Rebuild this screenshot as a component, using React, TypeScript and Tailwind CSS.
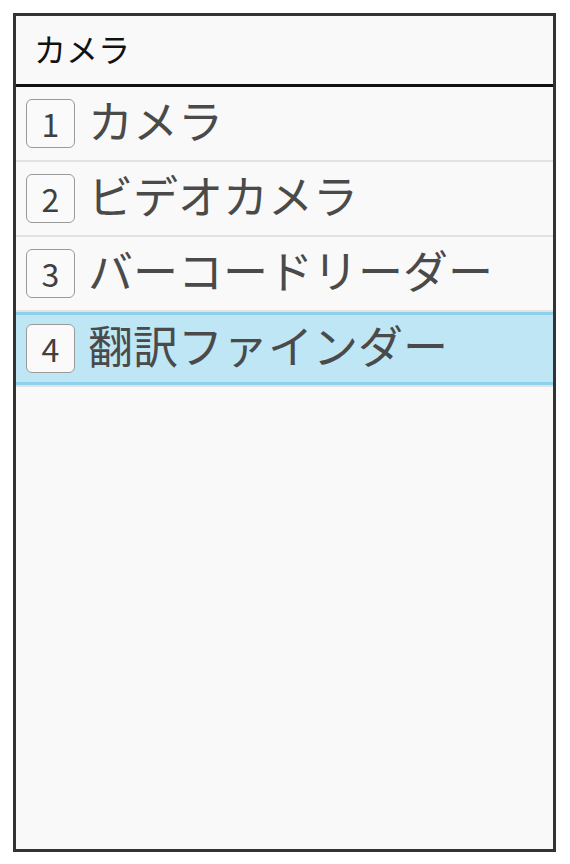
const items = ['カメラ', 'ビデオカメラ', 'バーコードリーダー', '翻訳ファインダー'];

const font = { fontFamily: '"Noto Sans CJK JP", "Noto Sans", sans-serif' };

function MenuRow({ num, label, selected }: { num: number; label: string; selected: boolean }) {
  return (
    <div className="border-b-2 border-[#e2e2e2]">
      <div
        className={
          selected
            ? 'flex h-[73px] items-center gap-[13px] border-y-[3px] border-[#8dd1ec] bg-[#bfe6f4] pl-[10px]'
            : 'flex h-[73px] items-center gap-[13px] pl-[10px]'
        }
      >
        <div className="flex h-[49px] w-[49px] shrink-0 items-center justify-center rounded-[6px] border-[1.5px] border-[#9a9a9a] bg-[#fafafa] pb-[2px] text-[32px] leading-none text-[#404040]">
          {num}
        </div>
        <span className="pb-[8px] text-[45px] leading-none text-[#4a4a4a]">{label}</span>
      </div>
    </div>
  );
}

export default function App() {
  return (
    <div className="min-h-[864px] w-[570px] bg-white p-[13px]" style={font}>
      <div className="flex h-[839px] w-[543px] flex-col border-[3px] border-[#333333] bg-[#f9f9f9]">
        <div className="flex h-[71px] shrink-0 items-center border-b-[3px] border-[#111111] pb-[4px] pl-[18px]">
          <span className="text-[32px] leading-none text-[#111111]">カメラ</span>
        </div>
        {items.map((label, i) => (
          <MenuRow key={label} num={i + 1} label={label} selected={i === 3} />
        ))}
      </div>
    </div>
  );
}
